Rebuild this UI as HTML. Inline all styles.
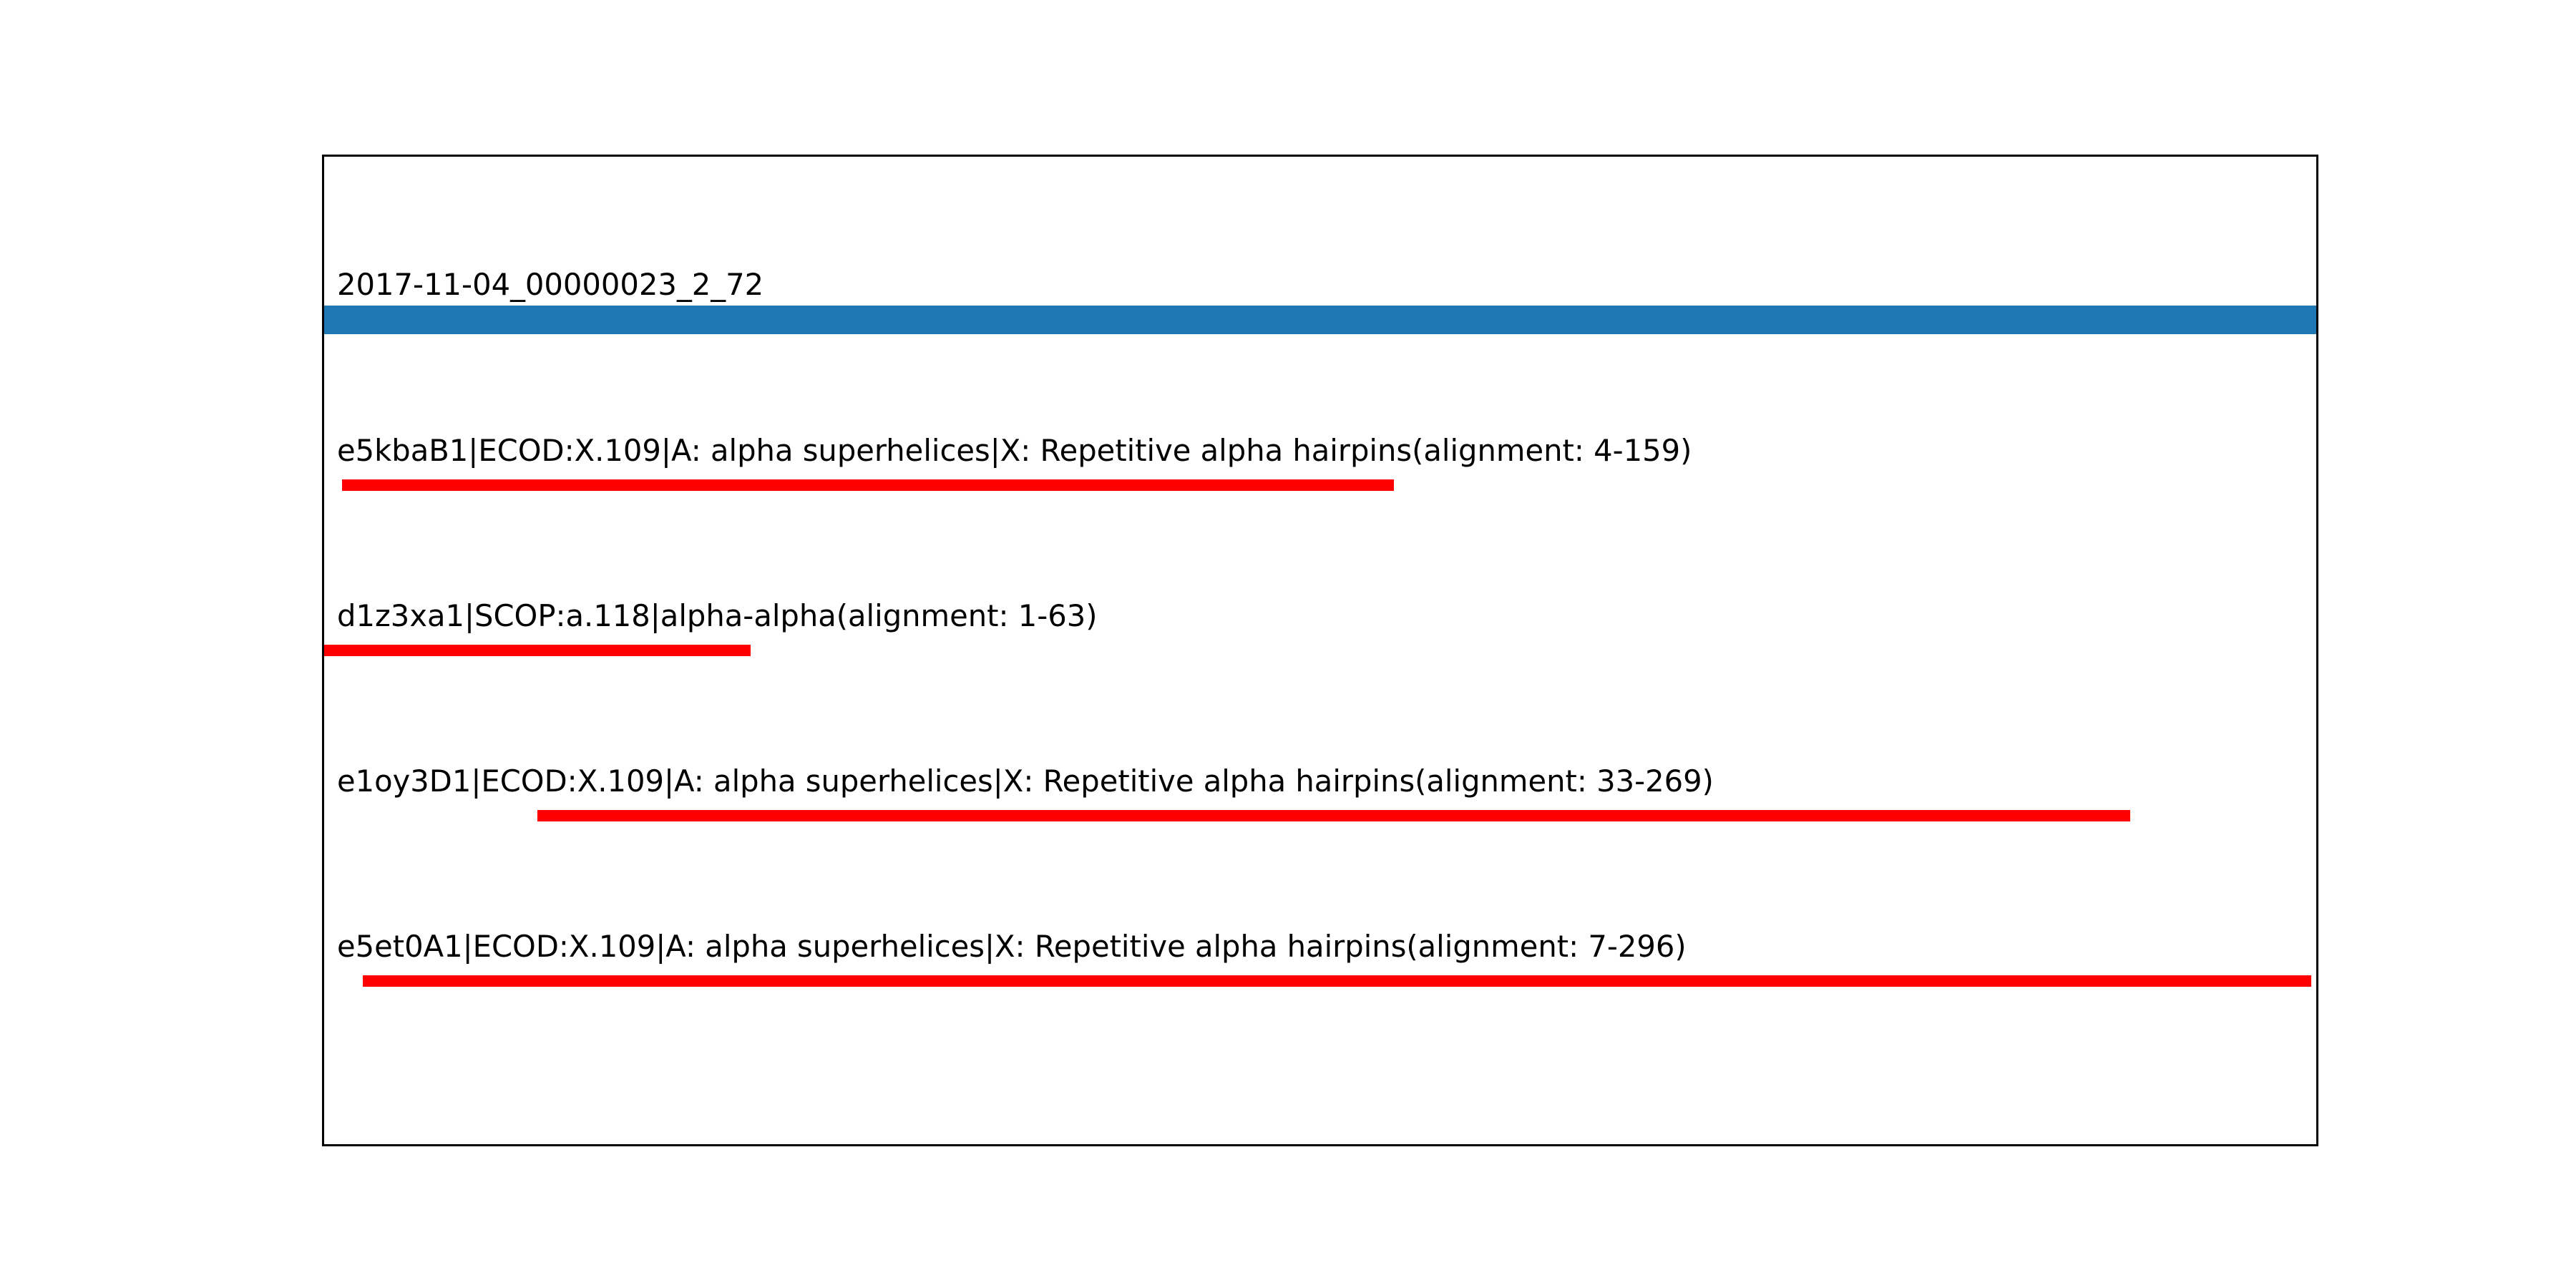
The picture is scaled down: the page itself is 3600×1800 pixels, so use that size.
<!DOCTYPE html>
<html><head><style>html,body{margin:0;padding:0;background:#fff}svg{display:block}</style></head>
<body>
<svg width="3600" height="1800" xmlns="http://www.w3.org/2000/svg" font-family="'DejaVu Sans','Liberation Sans',sans-serif" font-size="41.67">
<rect width="3600" height="1800" fill="#fff"/>
<rect x="450" y="427" width="2790" height="40" fill="#1f77b4"/>
<rect x="478" y="670" width="1470" height="16" fill="#ff0000"/>
<rect x="450" y="901" width="599" height="16" fill="#ff0000"/>
<rect x="751" y="1132" width="2226" height="16" fill="#ff0000"/>
<rect x="507" y="1363" width="2723" height="16" fill="#ff0000"/>
<rect x="451.5" y="217.5" width="2787" height="1383" fill="none" stroke="#000" stroke-width="3"/>
<text x="471" y="412">2017-11-04_00000023_2_72</text>
<text x="471" y="644">e5kbaB1|ECOD:X.109|A: alpha superhelices|X: Repetitive alpha hairpins(alignment: 4-159)</text>
<text x="471" y="875">d1z3xa1|SCOP:a.118|alpha-alpha(alignment: 1-63)</text>
<text x="471" y="1106">e1oy3D1|ECOD:X.109|A: alpha superhelices|X: Repetitive alpha hairpins(alignment: 33-269)</text>
<text x="471" y="1337">e5et0A1|ECOD:X.109|A: alpha superhelices|X: Repetitive alpha hairpins(alignment: 7-296)</text>
</svg>
</body></html>
